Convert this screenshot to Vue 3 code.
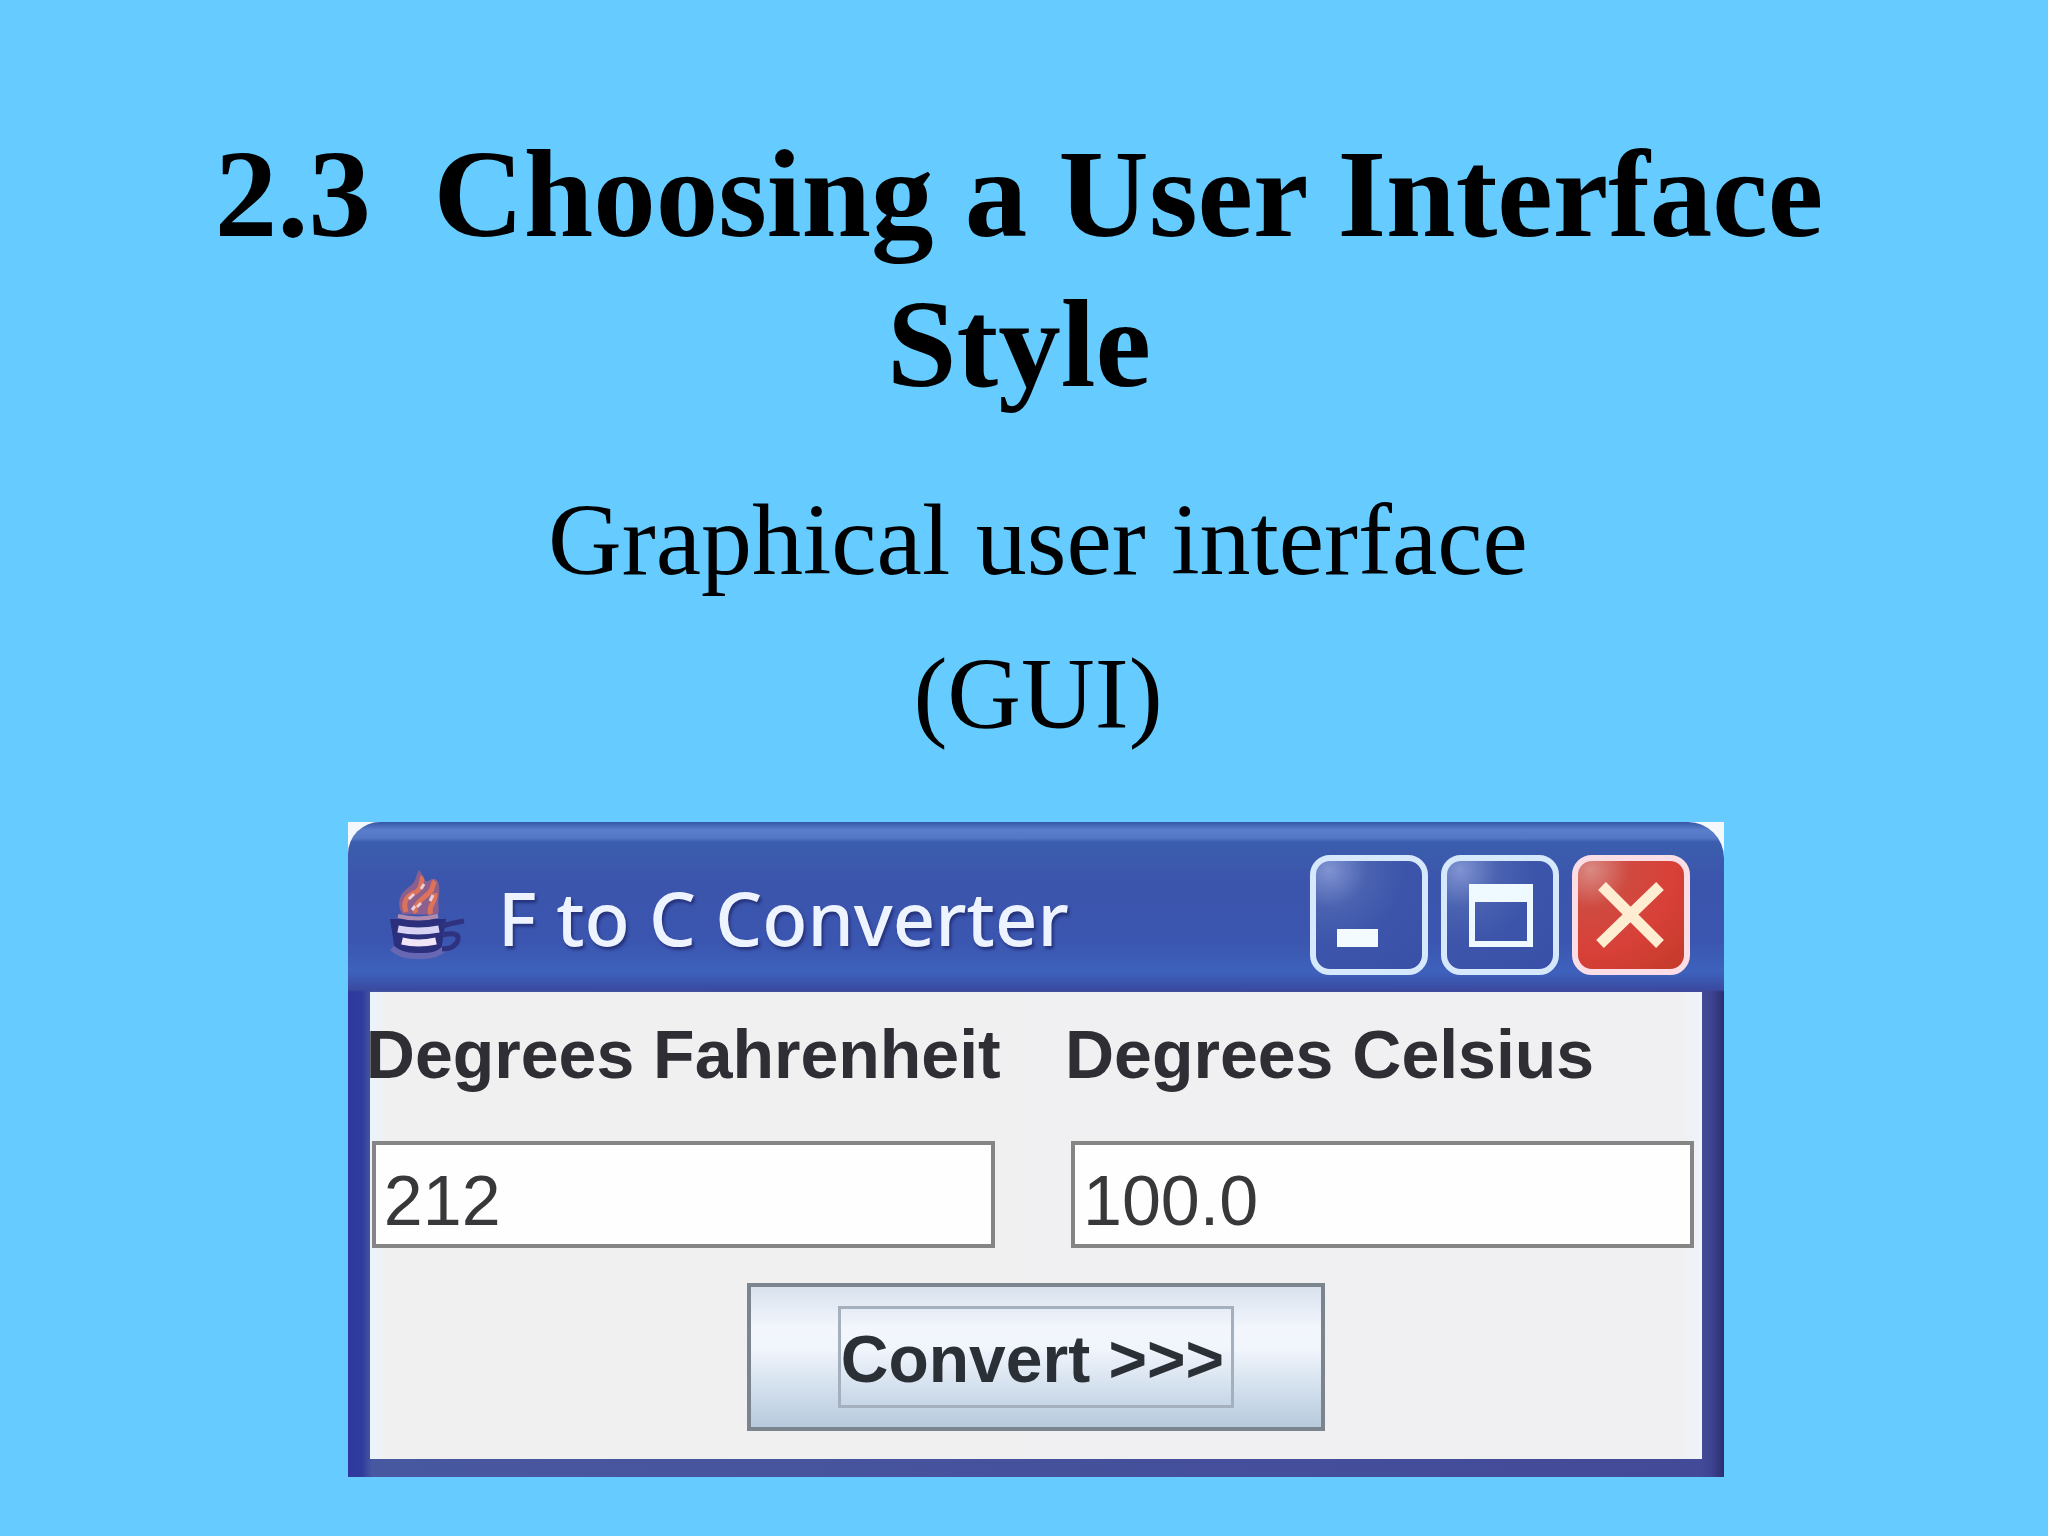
<script setup>
import { ref } from 'vue'

const fahrenheit = ref('212')
const celsius = ref('100.0')

function convert() {
  const value = (Number(fahrenheit.value) - 32) * 5 / 9
  celsius.value = value.toFixed(1)
}
</script>

<template>
  <main class="slide">
    <h1 class="heading">2.3&nbsp; Choosing a User Interface Style</h1>

    <section class="body">
      <p class="subtitle">Graphical user interface</p>
      <p class="subtitle">(GUI)</p>

      <div class="window">
        <div class="frame">
          <header class="titlebar">
            <svg class="java" viewBox="0 0 80 96" aria-hidden="true">
              <path d="M16 47 C10 36 14 26 23 20 C32 14 29 8 33 3 C40 12 38 17 44 13 C53 8 54 20 53 28 C51 36 54 42 52 48 Z" fill="#8d5f8e" />
              <path d="M20 45 C16 34 22 28 30 25 C38 20 34 12 37 10 M30 46 C26 38 37 32 44 25 C48 21 46 17 49 14 M45 47 C41 40 50 36 49 26" fill="none" stroke="#dc7358" stroke-width="5" />
              <path d="M23 32 L28 27 M35 22 L38 17 M31 40 L35 36 M44 34 L47 28 M26 43 L29 39" stroke="#e8cfd8" stroke-width="3" />
              <path d="M4 52 H60 L55 84 Q32 94 9 84 Z" fill="#2b2f7c" />
              <path d="M12 49 Q32 54 52 49" fill="none" stroke="#b08bb0" stroke-width="4" />
              <path d="M12 62 Q32 66 53 62" fill="none" stroke="#d8d2f4" stroke-width="7" />
              <path d="M16 74 Q32 78 50 74" fill="none" stroke="#f1e6f8" stroke-width="7" />
              <path d="M6 81 Q16 90 32 89 Q50 90 58 82" fill="none" stroke="#6867b4" stroke-width="6" />
              <path d="M56 59 Q66 56 78 54 M56 68 Q74 64 72 73 Q69 82 56 82" fill="none" stroke="#2f337f" stroke-width="5" />
            </svg>
            <h2 class="caption">F to C Converter</h2>
            <div class="controls">
              <button class="control" type="button" aria-label="Minimize">
                <svg viewBox="0 0 118 118"><rect x="27" y="73" width="41" height="18" fill="#f4fbff" /></svg>
              </button>
              <button class="control" type="button" aria-label="Maximize">
                <svg viewBox="0 0 118 118">
                  <path fill-rule="evenodd" fill="#eefaff" d="M28 28H92V91H28Z M34 46V85H86V46Z" />
                </svg>
              </button>
              <button class="control close" type="button" aria-label="Close">
                <svg viewBox="0 0 118 118">
                  <path d="M30 30L88 88M88 30L28 88" stroke="#ffedd2" stroke-width="11" />
                </svg>
              </button>
            </div>
          </header>

          <form class="content" @submit.prevent="convert">
            <div class="fields">
              <div class="field">
                <label for="fahrenheit">Degrees Fahrenheit</label>
                <input id="fahrenheit" v-model="fahrenheit" type="text">
              </div>
              <div class="field">
                <label for="celsius">Degrees Celsius</label>
                <input id="celsius" v-model="celsius" type="text">
              </div>
            </div>
            <button class="convert" type="submit">
              <span class="focus">Convert &gt;&gt;&gt;</span>
            </button>
          </form>
        </div>
      </div>
    </section>
  </main>
</template>

<style>
html {
  background: #66ccff;
}
</style>

<style scoped>
.slide {
  box-sizing: border-box;
  padding: 119px 0 56px;
  color: #000;
  font-family: "Liberation Serif", "Times New Roman", serif;
}

.heading {
  margin: 0 auto;
  padding: 0 calc(8% + 10px) 0 8%;
  font-size: 125px;
  font-weight: 700;
  line-height: 150px;
  text-align: center;
}

.body {
  padding: 44px 0 0 24px;
}

.subtitle {
  margin: 0;
  padding-left: 4px;
  font-size: 102px;
  line-height: 154px;
  text-align: center;
}

.window {
  width: 68%;
  margin: 51px auto 0;
  background: #f2f8fc;
  font-family: "Liberation Sans", Arial, sans-serif;
}

.frame {
  padding: 0 22px 18px;
  border-radius: 32px 36px 0 0;
  background:
    linear-gradient(to bottom, #3655a6 0, #5a7ecb 8px, #5577c6 16px, #3b5eae 20px, #3b55ac 60px, #3b56b0 120px, #3e62bc 150px, #3a49a0 168px, transparent 170px) no-repeat 0 0 / 100% 170px,
    linear-gradient(to right, #3038a0 0, #2f3c9c 14px, #4858a0 24px, #434a98 calc(100% - 24px), #3d438e calc(100% - 12px), #2b2f70 100%);
}

.titlebar {
  display: flex;
  align-items: center;
  box-sizing: border-box;
  height: 170px;
  padding: 16px 12px 0 16px;
}

.java {
  flex: none;
  width: 80px;
  height: 96px;
}

.caption {
  flex: 1;
  margin: 0 0 0 32px;
  padding-top: 6px;
  color: #eef4ff;
  font-family: "Noto Sans", "Open Sans", sans-serif;
  font-size: 74px;
  font-weight: 500;
  line-height: 96px;
  text-shadow: 2px 3px 3px #26337c;
  white-space: nowrap;
}

.controls {
  display: flex;
  gap: 13px;
}

.control {
  box-sizing: border-box;
  width: 118px;
  height: 120px;
  padding: 0;
  border: 6px solid #d5e8fc;
  border-radius: 20px;
  background: radial-gradient(circle at 12% 8%, #8093d2 0, #4a62b0 28%, #3c55aa 55%, #3a50a8 100%);
}

.control.close {
  border-color: #fbdde6;
  background: radial-gradient(circle at 12% 8%, #d98a84 0, #cf4a40 28%, #d84038 60%, #c23a28 100%);
}

.control svg {
  display: block;
  width: 118px;
  height: 118px;
  margin: -6px;
}

.content {
  display: flex;
  flex-direction: column;
  align-items: center;
  gap: 35px;
  padding: 22px 0 28px;
  background: linear-gradient(to right, #eaf4fc 0, #f0f0f1 16px, #f0f0f2 calc(100% - 20px), #eef4fb 100%);
}

.fields {
  display: grid;
  grid-template-columns: repeat(2, minmax(0, 1fr));
  gap: 76px;
  box-sizing: border-box;
  width: 100%;
  padding: 0 8px 0 2px;
}

.field {
  display: flex;
  flex-direction: column;
  gap: 47px;
}

.field label {
  margin-left: -6px;
  color: #2e2e34;
  font-size: 68px;
  font-weight: 700;
  line-height: 80px;
  white-space: nowrap;
}

.field input {
  box-sizing: border-box;
  width: 100%;
  height: 107px;
  padding: 12px 8px 0;
  border: 4px solid #858585;
  border-radius: 0;
  background: #fefefe;
  color: #38383a;
  font-family: inherit;
  font-size: 70px;
}

.convert {
  padding: 19px 87px;
  border: 4px solid #7c848e;
  border-radius: 0;
  background: linear-gradient(to bottom, #d9e2ee 0, #f3f7fd 30%, #f0f4fb 45%, #d3e0ee 72%, #b7cadc 100%);
  color: #2b3036;
  font-family: inherit;
  font-size: 66px;
  font-weight: 700;
  line-height: 92px;
}

.focus {
  display: block;
  padding: 4px 7px 0 0;
  border: 3px solid #a5b0bf;
  white-space: nowrap;
}
</style>
